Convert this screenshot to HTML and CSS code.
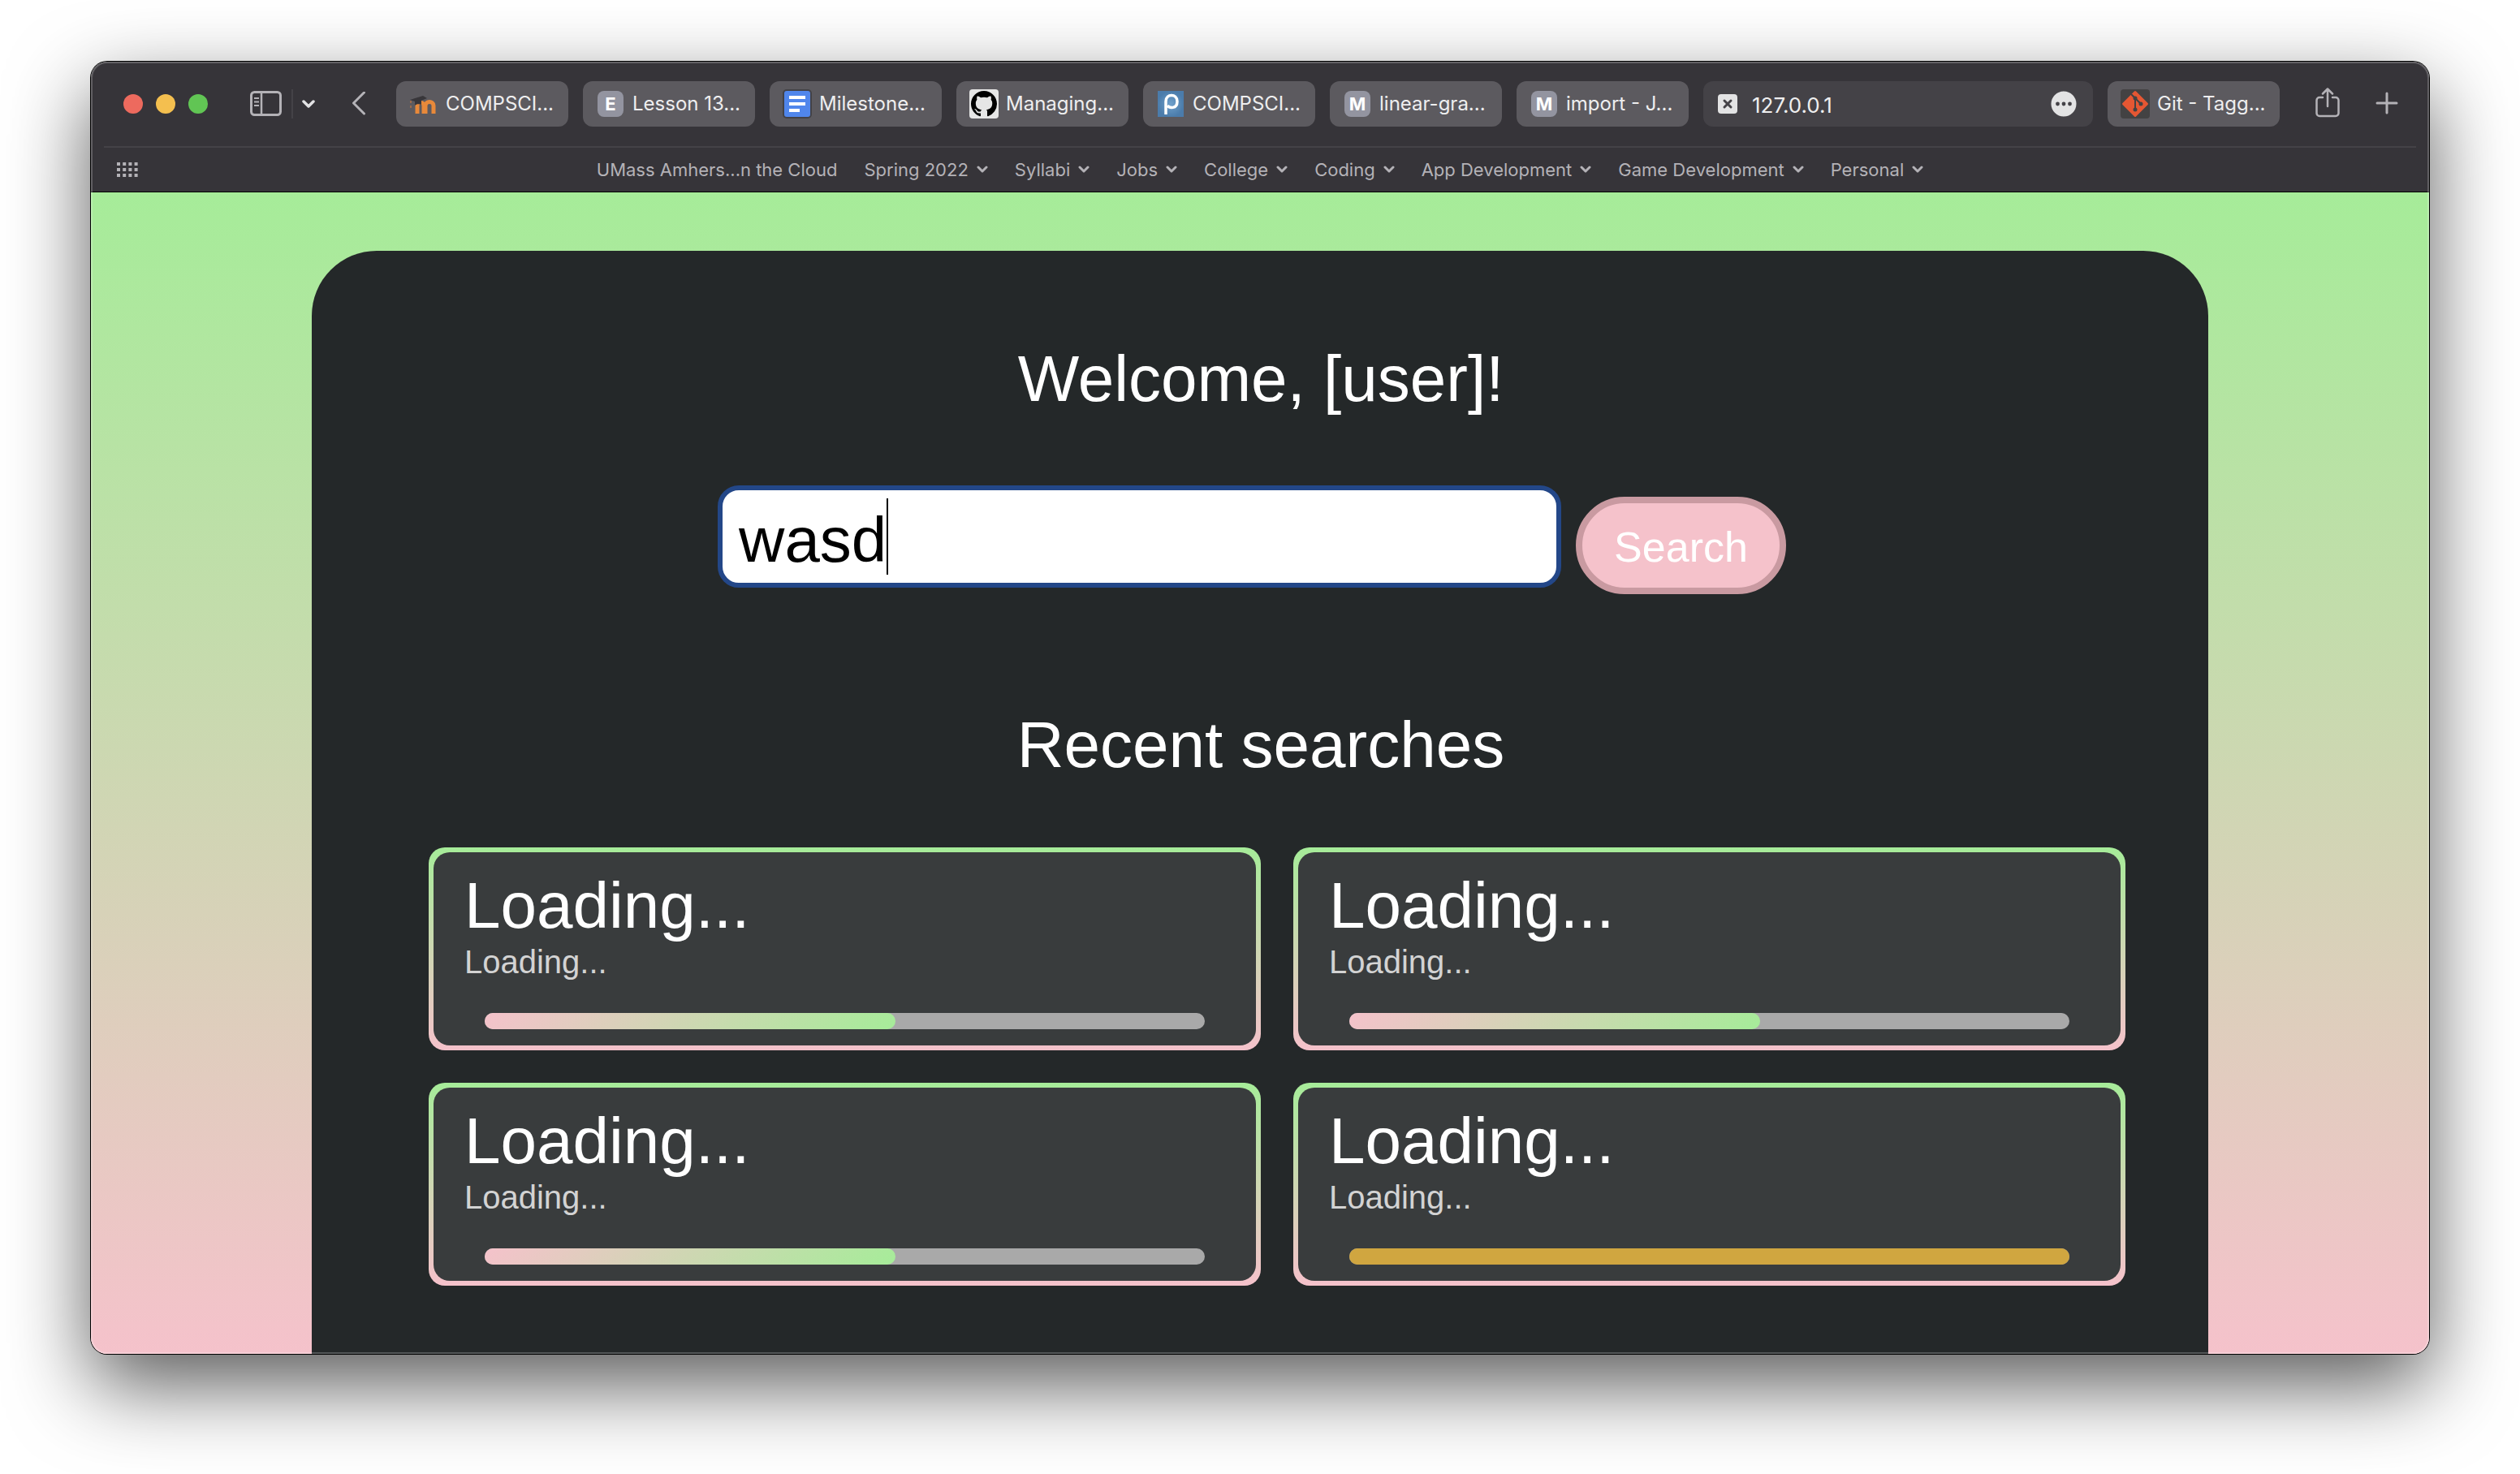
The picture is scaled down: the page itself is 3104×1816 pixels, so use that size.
FILE: index.html
```html
<!DOCTYPE html>
<html lang="en">
<head>
<meta charset="utf-8">
<title>Search</title>
<link rel="stylesheet" href="styles.css">
</head>
<body>
<div class="window">
  <header class="chrome">
    <div class="toolbar">
      <div class="lights">
        <button class="light light-close" aria-label="Close"></button>
        <button class="light light-min" aria-label="Minimize"></button>
        <button class="light light-max" aria-label="Zoom"></button>
      </div>
      <div class="sidebar-group">
        <button class="icon-btn" aria-label="Sidebar">
          <svg width="40" height="32" viewBox="0 0 40 32" fill="none" stroke="#b4b2b7" stroke-width="3"><rect x="1.5" y="1.5" width="36" height="28" rx="4"/><path d="M14 2v27" stroke-width="2.5"/><path d="M5 9h6M5 13.500h6M5 18h6" stroke-width="2"/></svg>
        </button>
        <span class="rule"></span>
        <button class="icon-btn" aria-label="Tab groups">
          <svg width="16" height="12" viewBox="0 0 16 12" fill="none" stroke="#e2e2e4" stroke-width="3.500" stroke-linecap="round" stroke-linejoin="round"><path d="M2 3l6 6 6-6"/></svg>
        </button>
      </div>
      <button class="icon-btn back" aria-label="Back">
        <svg width="18" height="30" viewBox="0 0 18 30" fill="none" stroke="#b4b2b7" stroke-width="3" stroke-linecap="round" stroke-linejoin="round"><path d="M15.500 1L2.500 14l13 13"/></svg>
      </button>
      <nav class="tabs" aria-label="Tabs">
        <button class="tab">
          <svg class="favicon" viewBox="0 0 36 36" fill="none"><path d="M10 30V19M10 30V20c0-5 8-5 8 0v10M20 30V20c0-6 10-6 10 0v10" stroke="#e8893a" stroke-width="5"/><path d="M1 13l16-5 5 3-7 3v5c-3-1-6-1-8 1v-5z" fill="#38363a"/><path d="M2 14v12" stroke="#9a6a4c" stroke-width="2" stroke-dasharray="3 3"/></svg>
          <span class="tab-label">COMPSCI...</span>
        </button>
        <button class="tab"><span class="favicon"><span class="letter">E</span></span><span class="tab-label">Lesson 13...</span></button>
        <button class="tab">
          <svg class="favicon" viewBox="0 0 36 36"><rect width="36" height="36" rx="5" fill="#434247"/><rect x="2" y="2" width="32" height="32" rx="3" fill="#5086ec"/><path d="M8 8h20v4H8zM8 16h20v4H8zM8 24h13v4H8z" fill="#fff"/></svg>
          <span class="tab-label">Milestone...</span>
        </button>
        <button class="tab">
          <svg class="favicon" viewBox="0 0 36 36"><rect width="36" height="36" rx="4" fill="#e6e6e6"/><path transform="translate(2 2) scale(2)" fill="#000" d="M8 0C3.580 0 0 3.580 0 8c0 3.540 2.290 6.530 5.470 7.590.4.070.55-.17.55-.38 0-.19-.01-.82-.01-1.490-2.010.37-2.530-.49-2.690-.94-.09-.23-.48-.94-.82-1.130-.28-.15-.68-.52-.01-.53.63-.01 1.080.58 1.230.82.72 1.210 1.870.87 2.330.66.070-.52.28-.87.51-1.070-1.780-.2-3.640-.89-3.640-3.950 0-.87.31-1.590.82-2.150-.08-.2-.36-1.020.08-2.120 0 0 .67-.21 2.200.82.64-.18 1.320-.27 2-.27s1.360.09 2 .27c1.530-1.040 2.200-.82 2.200-.82.44 1.100.16 1.920.08 2.120.51.56.82 1.270.82 2.150 0 3.070-1.870 3.750-3.650 3.950.29.25.54.73.54 1.480 0 1.070-.01 1.930-.01 2.200 0 .21.15.46.55.38A8.010 8.010 0 0 0 16 8c0-4.420-3.580-8-8-8z"/></svg>
          <span class="tab-label">Managing...</span>
        </button>
        <button class="tab">
          <svg class="favicon" viewBox="0 0 36 36" fill="none"><defs><radialGradient id="piazza"><stop offset="0" stop-color="#6fa0cb"/><stop offset="1" stop-color="#4b7cab"/></radialGradient></defs><path d="M2 2h32v32H2z" fill="url(#piazza)"/><path d="M12 31V15c0-10 14-10 14 0s-10 8-12 5" stroke="#fff" stroke-width="3.500"/></svg>
          <span class="tab-label">COMPSCI...</span>
        </button>
        <button class="tab"><span class="favicon"><span class="letter">M</span></span><span class="tab-label">linear-gra...</span></button>
        <button class="tab"><span class="favicon"><span class="letter">M</span></span><span class="tab-label">import - J...</span></button>
        <div class="address">
          <button class="icon-btn" aria-label="Close tab">
            <svg width="24" height="24" viewBox="0 0 24 24"><rect width="24" height="24" rx="4" fill="#e3e3e4"/><path d="M8 8l8 8M16 8l-8 8" stroke="#444247" stroke-width="3" stroke-linecap="round"/></svg>
          </button>
          <input class="address-input" type="text" value="127.0.0.1" aria-label="Address">
          <button class="icon-btn" aria-label="Page menu">
            <svg width="32" height="32" viewBox="0 0 32 32"><circle cx="16" cy="16" r="15.500" fill="#e3e3e4"/><g fill="#444247"><circle cx="8.500" cy="16" r="2.400"/><circle cx="16" cy="16" r="2.400"/><circle cx="23.500" cy="16" r="2.400"/></g></svg>
          </button>
        </div>
        <button class="tab">
          <svg class="favicon" viewBox="0 0 36 36" fill="none"><rect width="36" height="36" rx="4" fill="#434243"/><path d="M18 3.500L32.500 18 18 32.500 3.500 18z" fill="#e55733" stroke="#e55733" stroke-width="3" stroke-linejoin="round"/><path d="M13 6l5 5v14M18 11l7 7" stroke="#434243" stroke-width="2"/><g fill="#434243"><circle cx="18" cy="11" r="2.500"/><circle cx="25" cy="18" r="2.500"/><circle cx="18" cy="25" r="2.500"/></g></svg>
          <span class="tab-label">Git - Tagg...</span>
        </button>
      </nav>
      <div class="actions">
        <button class="icon-btn" aria-label="Share">
          <svg width="30" height="40" viewBox="0 0 30 40" fill="none" stroke="#b4b2b7" stroke-width="2.500" stroke-linecap="round" stroke-linejoin="round"><path d="M9 12H5a3.500 3.500 0 0 0-3.500 3.500v16A3.500 3.500 0 0 0 5 35h20a3.500 3.500 0 0 0 3.500-3.500v-16A3.500 3.500 0 0 0 25 12h-4M15 23V1.500M9 7.500l6-6 6 6"/></svg>
        </button>
        <button class="icon-btn" aria-label="New tab">
          <svg width="28" height="30" viewBox="0 0 28 30" stroke="#b4b2b7" stroke-width="3" stroke-linecap="round"><path d="M14 2v24M2 14h24"/></svg>
        </button>
      </div>
    </div>
    <div class="bookmarks">
      <button class="icon-btn apps" aria-label="Show all bookmarks">
        <svg width="26" height="18" viewBox="0 0 26 18" stroke="#b4b2b7" stroke-width="4" stroke-dasharray="4 3.200"><path d="M0 2h26M0 9h26M0 16h26"/></svg>
      </button>
      <nav class="bookmark-list" aria-label="Bookmarks">
        <a class="bookmark" href="#">UMass Amhers...n the Cloud</a>
        <button class="bookmark">Spring 2022<svg class="chev" viewBox="0 0 14 10"><path d="M2 2l5 5 5-5"/></svg></button>
        <button class="bookmark">Syllabi<svg class="chev" viewBox="0 0 14 10"><path d="M2 2l5 5 5-5"/></svg></button>
        <button class="bookmark">Jobs<svg class="chev" viewBox="0 0 14 10"><path d="M2 2l5 5 5-5"/></svg></button>
        <button class="bookmark">College<svg class="chev" viewBox="0 0 14 10"><path d="M2 2l5 5 5-5"/></svg></button>
        <button class="bookmark">Coding<svg class="chev" viewBox="0 0 14 10"><path d="M2 2l5 5 5-5"/></svg></button>
        <button class="bookmark">App Development<svg class="chev" viewBox="0 0 14 10"><path d="M2 2l5 5 5-5"/></svg></button>
        <button class="bookmark">Game Development<svg class="chev" viewBox="0 0 14 10"><path d="M2 2l5 5 5-5"/></svg></button>
        <button class="bookmark">Personal<svg class="chev" viewBox="0 0 14 10"><path d="M2 2l5 5 5-5"/></svg></button>
      </nav>
    </div>
  </header>
  <div class="page">
    <main class="panel">
      <h1 class="heading">Welcome, [user]!</h1>
      <form class="search">
        <div class="field">
          <input class="search-input" type="text" value="wasd" aria-label="Search">
          <span class="caret"></span>
        </div>
        <button class="search-btn" type="button">Search</button>
      </form>
      <h2 class="heading">Recent searches</h2>
      <div class="results">
        <article class="card">
          <div class="card-body">
            <h3 class="card-title">Loading...</h3>
            <p class="card-sub">Loading...</p>
            <div class="bar"><div class="fill" style="width: 57%"></div></div>
          </div>
        </article>
        <article class="card">
          <div class="card-body">
            <h3 class="card-title">Loading...</h3>
            <p class="card-sub">Loading...</p>
            <div class="bar"><div class="fill" style="width: 57%"></div></div>
          </div>
        </article>
        <article class="card">
          <div class="card-body">
            <h3 class="card-title">Loading...</h3>
            <p class="card-sub">Loading...</p>
            <div class="bar"><div class="fill" style="width: 57%"></div></div>
          </div>
        </article>
        <article class="card">
          <div class="card-body">
            <h3 class="card-title">Loading...</h3>
            <p class="card-sub">Loading...</p>
            <div class="bar"><div class="fill fill-gold" style="width: 100%"></div></div>
          </div>
        </article>
      </div>
    </main>
  </div>
</div>
</body>
</html>
```
FILE: styles.css
```css
* { box-sizing: border-box; }

body {
  margin: 0;
  padding: 76px 112px 148px;
  background: #fff;
  font-family: "Liberation Sans", Arial, sans-serif;
}

button {
  margin: 0;
  padding: 0;
  border: 0;
  background: none;
  font: inherit;
  color: inherit;
}

svg { display: block; }

/* Window */
.window {
  position: relative;
  display: flex;
  flex-direction: column;
  min-height: calc(100vh - 224px);
  border-radius: 20px;
  overflow: hidden;
  box-shadow: 0 0 0 1px #000, 0 38px 100px rgba(0, 0, 0, 0.65);
}

.window::after {
  content: "";
  position: absolute;
  inset: 0;
  border-radius: 20px;
  box-shadow: inset 0 0 0 2px rgba(255, 255, 255, 0.22);
  pointer-events: none;
}

/* Browser chrome */
.chrome {
  background: #363439;
  border-bottom: 1px solid #000;
  font-family: Inter, "Noto Sans", sans-serif;
}

.toolbar {
  display: flex;
  align-items: center;
  height: 104px;
  padding: 0 38px 0 40px;
}

.lights { display: flex; gap: 16px; }

.light {
  width: 24px;
  height: 24px;
  border-radius: 50%;
}

.light-close { background: #ed6a5e; }
.light-min { background: #f4bf4f; }
.light-max { background: #61c554; }

.icon-btn { flex: none; }

.sidebar-group {
  display: flex;
  align-items: center;
  gap: 11px;
  margin-left: 52px;
}

.rule {
  width: 2px;
  height: 36px;
  background: #444247;
}

.back { margin-left: 45px; }

.tabs {
  display: grid;
  flex: 1;
  grid-template-columns: repeat(7, minmax(0, 212fr)) minmax(0, 480fr) minmax(0, 212fr);
  gap: 18px;
  min-width: 0;
  margin: 0 44px 0 37px;
}

.tab {
  display: flex;
  align-items: center;
  gap: 9px;
  min-width: 0;
  height: 56px;
  padding: 0 16px;
  border-radius: 12px;
  background: #5c5a5f;
  color: #eeeeef;
  font-size: 24px;
  line-height: 32px;
}

.favicon {
  display: flex;
  flex: none;
  align-items: center;
  justify-content: center;
  width: 36px;
  height: 36px;
}

.letter {
  width: 32px;
  height: 32px;
  border-radius: 8px;
  background: #9394a0;
  color: #fff;
  font-size: 22px;
  font-weight: 700;
  line-height: 32px;
  text-align: center;
}

.tab-label { white-space: nowrap; }

.address {
  display: flex;
  align-items: center;
  gap: 18px;
  min-width: 0;
  height: 56px;
  padding: 0 20px 0 18px;
  border-radius: 12px;
  background: #444247;
}

.address-input {
  flex: 1;
  min-width: 0;
  height: 56px;
  padding: 2px 0 0;
  border: 0;
  outline: 0;
  background: none;
  color: #eeeeef;
  font-family: inherit;
  font-size: 26px;
}

.actions {
  display: flex;
  align-items: center;
  gap: 44px;
}

.bookmarks {
  display: grid;
  grid-template-columns: 1fr auto 1fr;
  align-items: center;
  height: 56px;
  margin: 0 16px;
  border-top: 2px solid #444247;
}

.apps { justify-self: start; margin-left: 16px; }

.bookmark-list { display: flex; gap: 33px; }

.bookmark {
  display: flex;
  align-items: center;
  gap: 10px;
  color: #b4b2b7;
  font-size: 22px;
  line-height: 28px;
  text-decoration: none;
  white-space: nowrap;
}

.chev {
  width: 14px;
  height: 10px;
  fill: none;
  stroke: #b4b2b7;
  stroke-width: 3;
  stroke-linecap: round;
  stroke-linejoin: round;
}

/* Page */
.page {
  display: flex;
  flex: 1;
  flex-direction: column;
  padding: 72px 272px 0;
  background: linear-gradient(#a6ec99, #f5c2cb);
}

.panel {
  flex: 1;
  padding: 112px 102px 80px 144px;
  border-radius: 80px 80px 0 0;
  background: #242829;
}

.heading {
  margin: 0 40px 0 0;
  color: #fff;
  font-size: 80px;
  font-weight: 400;
  line-height: 92px;
  text-align: center;
}

.search {
  display: flex;
  align-items: baseline;
  justify-content: center;
  gap: 18px;
  margin: 85px 62px 140px 0;
}

.field {
  position: relative;
  flex: 0 1 1039px;
}

.search-input {
  display: block;
  width: 100%;
  height: 126px;
  padding: 8px 20px 0;
  border: 6px solid #234788;
  border-radius: 26px;
  outline: 0;
  background: #fff;
  color: #000;
  font-family: inherit;
  font-size: 78px;
}

.caret {
  position: absolute;
  top: 16px;
  left: 208px;
  width: 2px;
  height: 94px;
  background: #000;
}

.search-btn {
  padding: 24px 39px 20px;
  border: 8px solid #c99aa1;
  border-radius: 60px;
  background: #f5c2cb;
  color: #fff;
  font-size: 52px;
  line-height: 60px;
}

.results {
  display: grid;
  grid-template-columns: 1fr 1fr;
  gap: 40px;
  margin-top: 80px;
}

.card {
  padding: 6px;
  border-radius: 20px;
  background: linear-gradient(#a6ec99, #f5c2cb);
}

.card-body {
  padding: 20px 38px;
  border-radius: 20px;
  background: #393c3d;
}

.card-title {
  margin: 0;
  color: #fff;
  font-size: 80px;
  font-weight: 400;
  line-height: 92px;
}

.card-sub {
  margin: 0;
  color: #d3d3d3;
  font-size: 40px;
  line-height: 46px;
}

.bar {
  height: 20px;
  margin: 40px 25px 0;
  border-radius: 10px;
  background: #a9a9a9;
}

.fill {
  height: 20px;
  border-radius: 10px;
  background: linear-gradient(135deg, #f5c2cb, #a6ec99);
}

.fill-gold { background: #d0a640; }
```
